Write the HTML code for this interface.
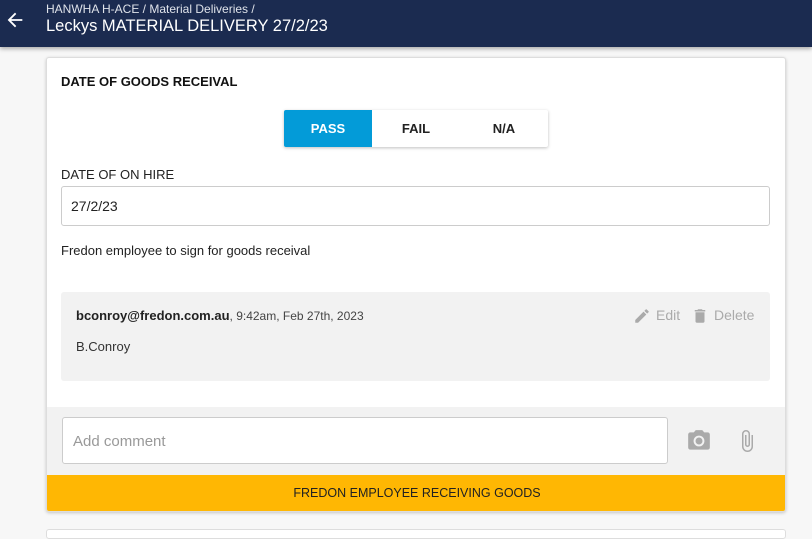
<!DOCTYPE html>
<html><head><style>
*{box-sizing:border-box;margin:0;padding:0}
body{width:812px;height:534px;overflow:hidden;background:#f7f7f7;font-family:"Liberation Sans",Arial,sans-serif;position:relative}
.hdr{position:absolute;left:0;top:0;width:812px;height:47px;background:#1b2b50;color:#fff;box-shadow:0 2px 4px rgba(0,0,0,.3)}
.abs{position:absolute}
.card{position:absolute;left:46px;top:57px;width:740px;height:455px;background:#fff;border:1px solid #ddd;border-radius:3px;box-shadow:0 1px 3px rgba(0,0,0,.2);overflow:hidden}
.seg{position:absolute;left:237px;top:52px;width:264px;height:37px;box-shadow:0 1px 3px rgba(0,0,0,.25);display:flex;border-radius:2px}
.seg div{width:88px;text-align:center;line-height:37px;font-size:13px;font-weight:bold;color:#222}
</style></head><body>
<div class="hdr">
<svg class="abs" style="left:4px;top:9px" width="22" height="22" viewBox="0 0 24 24"><path d="M20 11H7.8l5.6-5.6L12 4l-8 8 8 8 1.4-1.4L7.8 13H20z" fill="#fff"/></svg>
<div class="abs" style="left:46px;top:2px;font-size:12px;color:#dfe3ea">HANWHA H-ACE / Material Deliveries /</div>
<div class="abs" style="left:46px;top:17px;font-size:16.5px;color:#fff">Leckys MATERIAL DELIVERY 27/2/23</div>
</div>
<div class="card">
<div class="abs" style="left:14px;top:16px;font-size:13px;font-weight:bold;color:#111">DATE OF GOODS RECEIVAL</div>
<div class="seg"><div style="background:#039bd8;color:#fff;border-radius:2px 0 0 2px">PASS</div><div>FAIL</div><div>N/A</div></div>
<div class="abs" style="left:14px;top:109px;font-size:13px;color:#222">DATE OF ON HIRE</div>
<div class="abs" style="left:14px;top:128px;width:709px;height:40px;border:1px solid #ccc;border-radius:3px;padding:11px 9px;font-size:14px;color:#222">27/2/23</div>
<div class="abs" style="left:14px;top:185px;font-size:13px;color:#222">Fredon employee to sign for goods receival</div>
<div class="abs" style="left:14px;top:234px;width:709px;height:89px;background:#f2f2f2;border-radius:3px">
<div class="abs" style="left:15px;top:16px;font-size:13px;color:#222"><b>bconroy@fredon.com.au</b><span style="font-size:12px;color:#444">, 9:42am, Feb 27th, 2023</span></div>
<div class="abs" style="left:15px;top:47px;font-size:13px;color:#333">B.Conroy</div>
<svg class="abs" style="left:572px;top:15px" width="18" height="18" viewBox="0 0 24 24"><path d="M3 17.25V21h3.75L17.8 9.94l-3.75-3.75zM20.7 7.04a1 1 0 000-1.41l-2.34-2.34a1 1 0 00-1.41 0l-1.83 1.83 3.75 3.75z" fill="#aaa"/></svg>
<div class="abs" style="left:595px;top:15px;font-size:14px;color:#aaa">Edit</div>
<svg class="abs" style="left:630px;top:15px" width="18" height="18" viewBox="0 0 24 24"><path d="M6 19a2 2 0 002 2h8a2 2 0 002-2V7H6zM19 4h-3.5l-1-1h-5l-1 1H5v2h14z" fill="#aaa"/></svg>
<div class="abs" style="left:653px;top:15px;font-size:14px;color:#aaa">Delete</div>
</div>
<div class="abs" style="left:0;top:349px;width:740px;height:68px;background:#f2f2f2">
<div class="abs" style="left:15px;top:10px;width:606px;height:47px;background:#fff;border:1px solid #ccc;border-radius:3px;padding:15px 10px;font-size:15px;color:#999">Add comment</div>
<svg class="abs" style="left:639px;top:21px" width="26" height="26" viewBox="0 0 24 24"><circle cx="12" cy="12" r="3.2" fill="#aaa"/><path d="M9 2L7.17 4H4a2 2 0 00-2 2v12a2 2 0 002 2h16a2 2 0 002-2V6a2 2 0 00-2-2h-3.17L15 2zm3 15a5 5 0 110-10 5 5 0 010 10z" fill="#aaa"/></svg>
<svg class="abs" style="left:688px;top:20px" width="24" height="28" viewBox="0 0 24 24"><path d="M16.5 6v11.5a4 4 0 01-8 0V5a2.5 2.5 0 015 0v10.5a1 1 0 01-2 0V6H10v9.5a2.5 2.5 0 005 0V5a4 4 0 00-8 0v12.5a5.5 5.5 0 0011 0V6z" fill="#aaa"/></svg>
</div>
<div class="abs" style="left:0;top:417px;width:740px;height:37px;background:#ffb703;text-align:center;line-height:36px;font-size:12.5px;color:#222">FREDON EMPLOYEE RECEIVING GOODS</div>
</div>
<div class="abs" style="left:46px;top:529px;width:740px;height:10px;background:#fff;border:1px solid #ddd;border-radius:3px"></div>
</body></html>
